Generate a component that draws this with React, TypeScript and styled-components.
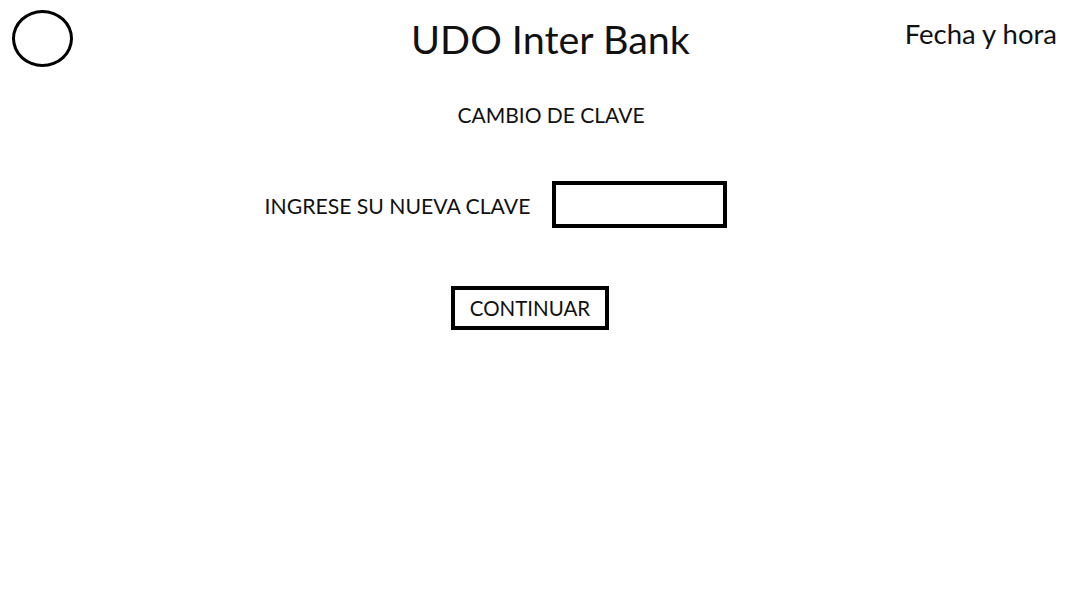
import React from "react";
import styled, { createGlobalStyle } from "styled-components";

const Global = createGlobalStyle`
  html, body { margin: 0; padding: 0; background: #fff; }
  body { font-family: Lato, "Open Sans", sans-serif; color: #111; }
`;

const Page = styled.div`
  width: 1080px;
  height: 607px;
  display: flex;
  flex-direction: column;
  background: #fff;
`;

const Header = styled.header`
  display: grid;
  grid-template-columns: 1fr auto 1fr;
  align-items: start;
  padding: 10px 23px 0 12px;
  height: 90px;
  box-sizing: border-box;
`;

const Logo = styled.div`
  width: 55px;
  height: 51px;
  border: 3px solid #000;
  border-radius: 50%;
`;

const Title = styled.h1`
  margin: 0;
  margin-left: 32px;
  font-weight: 400;
  font-size: 39.5px;
  line-height: 48px;
  padding-top: 5px;
`;

const DateTime = styled.div`
  justify-self: end;
  font-size: 27.5px;
  line-height: 30px;
  padding-top: 9px;
`;

const Content = styled.main`
  display: flex;
  flex-direction: column;
  align-items: center;
`;

const Subtitle = styled.h2`
  margin: 13px 0 0 22px;
  font-weight: 400;
  font-size: 21px;
  line-height: 24px;
`;

const Row = styled.div`
  display: flex;
  align-items: center;
  gap: 22px;
  margin: 54px 0 0 -88px;
`;

const Label = styled.label`
  font-size: 21.2px;
  padding-top: 2px;
`;

const Input = styled.input`
  width: 175px;
  height: 47px;
  box-sizing: border-box;
  border: 4px solid #000;
  outline: none;
  background: #fff;
`;

const Button = styled.button`
  margin: 58px 0 0 -20px;
  width: 158px;
  height: 44px;
  box-sizing: border-box;
  border: 4px solid #000;
  background: #fff;
  font-family: inherit;
  font-size: 20.5px;
  color: #111;
  padding: 0;
`;

export default function App() {
  return (
    <>
      <Global />
      <Page>
        <Header>
          <Logo />
          <Title>UDO Inter Bank</Title>
          <DateTime>Fecha y hora</DateTime>
        </Header>
        <Content>
          <Subtitle>CAMBIO DE CLAVE</Subtitle>
          <Row>
            <Label htmlFor="clave">INGRESE SU NUEVA CLAVE</Label>
            <Input id="clave" type="password" />
          </Row>
          <Button>CONTINUAR</Button>
        </Content>
      </Page>
    </>
  );
}
